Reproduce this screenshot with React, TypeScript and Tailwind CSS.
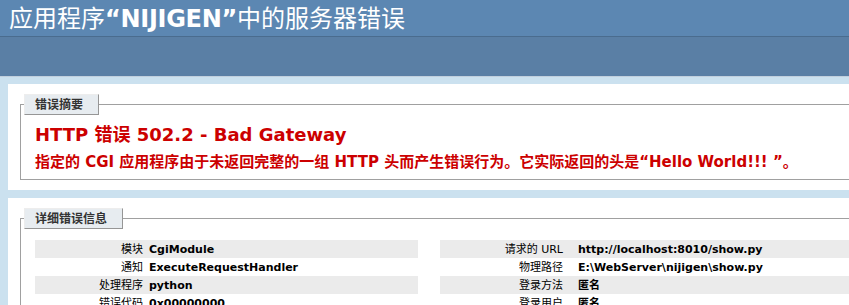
const leftRows = [
  { label: '模块', value: 'CgiModule' },
  { label: '通知', value: 'ExecuteRequestHandler' },
  { label: '处理程序', value: 'python' },
  { label: '错误代码', value: '0x00000000' },
];

const rightRows = [
  { label: '请求的 URL', value: 'http://localhost:8010/show.py' },
  { label: '物理路径', value: 'E:\\WebServer\\nijigen\\show.py' },
  { label: '登录方法', value: '匿名' },
  { label: '登录用户', value: '匿名' },
];

const Legend = ({ children }: { children: string }) => (
  <legend className="ml-[-11px] pl-[10px] pr-[15px] pt-[4px] pb-[3px] bg-[#E7ECF0] border border-t-[#EDEDED] border-l-[#EDEDED] border-r-[#969696] border-b-[#969696] text-[12px] leading-[12px] font-bold text-[#333333]">
    {children}
  </legend>
);

const App = () => {
  return (
    <div className="w-full h-[305px] overflow-hidden bg-[#CBE1EF] font-['DejaVu_Sans','Noto_Sans_CJK_SC',sans-serif]">
      {/* header */}
      <div className="h-[36px] bg-[#5C87B2] pl-[9px] flex items-center">
        <h1 className="text-[24px] leading-[28px] text-white font-normal whitespace-nowrap font-['Noto_Sans_CJK_SC',sans-serif]">
          应用程序<span className="font-bold font-['DejaVu_Sans',sans-serif] tracking-[-0.3px]">“NIJIGEN”</span>中的服务器错误
        </h1>
      </div>
      <div className="h-[41px] bg-[#5A7FA5] border-t border-b border-t-[#4A6C8E] border-b-[#C1CFDD]" />

      {/* summary */}
      <div className="ml-[8px] mt-[7px] w-[1000px] bg-white p-[10px]">
        <fieldset className="ml-[2px] px-[14px] pb-[8px] border border-[#a0a0a0]">
          <Legend>错误摘要</Legend>
          <h2 className="mt-[9px] text-[18px] leading-[22px] font-bold text-[#CC0000] whitespace-nowrap">
            HTTP 错误 502.2 - Bad Gateway
          </h2>
          <h3 className="mt-[7px] text-[15px] leading-[18px] font-bold text-[#CC0000] whitespace-nowrap">
            指定的 CGI 应用程序由于未返回完整的一组 HTTP 头而产生错误行为。它实际返回的头是“Hello World!!! ”。
          </h3>
        </fieldset>
      </div>

      {/* details */}
      <div className="ml-[8px] mt-[8px] w-[1000px] bg-white p-[10px]">
        <fieldset className="ml-[2px] px-[14px] pb-[9px] border border-[#a0a0a0]">
          <Legend>详细错误信息</Legend>
          <div className="mt-[11px] flex">
            <div className="w-[383px]">
              {leftRows.map((row, i) => (
                <div key={row.label} className={`flex pt-[4px] pb-[2px] text-[11px] leading-[12px] text-black ${i % 2 === 0 ? 'bg-[#ebebeb]' : 'bg-white'}`}>
                  <div className="w-[108px] text-right">{row.label}</div>
                  <div className="pl-[6px] font-bold whitespace-nowrap">{row.value}</div>
                </div>
              ))}
            </div>
            <div className="ml-[22px] w-[500px]">
              {rightRows.map((row, i) => (
                <div key={row.label} className={`flex pt-[4px] pb-[2px] text-[11px] leading-[12px] text-black ${i % 2 === 0 ? 'bg-[#ebebeb]' : 'bg-white'}`}>
                  <div className="w-[123px] text-right">{row.label}</div>
                  <div className="pl-[15px] font-bold whitespace-nowrap">{row.value}</div>
                </div>
              ))}
            </div>
          </div>
        </fieldset>
      </div>
    </div>
  );
};

export default App;
